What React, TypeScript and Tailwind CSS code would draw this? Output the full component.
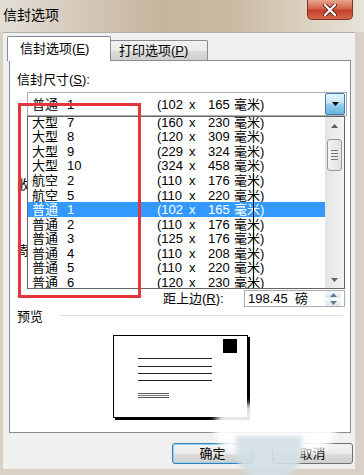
import React from 'react'

type Row = [string, string, string, string]

const rows: Row[] = [
  ['大型', '7', '(160', '230'],
  ['大型', '8', '(120', '309'],
  ['大型', '9', '(229', '324'],
  ['大型', '10', '(324', '458'],
  ['航空', '2', '(110', '176'],
  ['航空', '5', '(110', '220'],
  ['普通', '1', '(102', '165'],
  ['普通', '2', '(110', '176'],
  ['普通', '3', '(125', '176'],
  ['普通', '4', '(110', '208'],
  ['普通', '5', '(110', '220'],
  ['普通', '6', '(120', '230'],
]

const SizeCells = ({ r }: { r: Row }) => (
  <>
    <span className="w-[35px] shrink-0">{r[0]}</span>
    <span className="w-[90px] shrink-0">{r[1]}</span>
    <span className="w-[32px] shrink-0">{r[2]}</span>
    <span className="w-[19px] shrink-0">x</span>
    <span className="w-[26px] shrink-0">{r[3]}</span>
    <span className="shrink-0">毫米)</span>
  </>
)

const Tri = ({ up, color = '#555' }: { up?: boolean; color?: string }) => (
  <svg width="7" height="4" viewBox="0 0 7 4">
    <path d={up ? 'M0 4 L3.5 0 L7 4 Z' : 'M0 0 L7 0 L3.5 4 Z'} fill={color} />
  </svg>
)

const Envelope = () => (
  <svg width="138" height="86" viewBox="0 0 138 86">
    <rect x="2" y="2" width="135" height="83" fill="#000" />
    <rect x="0.5" y="0.5" width="134" height="82" fill="#fff" stroke="#000" />
    <rect x="110" y="4" width="14" height="14" fill="#000" />
    <line x1="25" y1="23.5" x2="99" y2="23.5" stroke="#222" />
    <line x1="25" y1="31.5" x2="99" y2="31.5" stroke="#222" />
    <line x1="25" y1="38.5" x2="99" y2="38.5" stroke="#222" />
    <line x1="25" y1="45.5" x2="99" y2="45.5" stroke="#222" />
    <line x1="25" y1="58.5" x2="56" y2="58.5" stroke="#555" />
    <line x1="25" y1="60.5" x2="56" y2="60.5" stroke="#777" />
    <line x1="25" y1="62.5" x2="56" y2="62.5" stroke="#555" />
  </svg>
)

export default function App() {
  return (
    <div className="relative w-[364px] h-[475px] overflow-hidden bg-[#d9d1c5] text-black text-[13px] font-['Liberation_Sans','Noto_Sans_CJK_SC',sans-serif]">
      {/* title bar */}
      <div className="h-[32px] flex items-start justify-between bg-[linear-gradient(90deg,#e3ded7_0%,#d2c6b6_25%,#c6b49b_45%,#cbbba4_65%,#ddd3c4_85%,#e7e2da_100%)]">
        <span className="ml-[3px] mt-[5px] text-[14px] leading-[18px] font-['Noto_Sans_CJK_SC',sans-serif]">信封选项</span>
        <div className="mr-[11px] w-[46px] h-[20px] rounded-b-[5px] border border-t-0 border-[#7d3424] bg-[linear-gradient(180deg,#e7a58f_0%,#d4654a_45%,#c4422b_55%,#d8654a_100%)] flex items-center justify-center">
          <svg width="14" height="12" viewBox="0 0 14 12">
            <path d="M2 1 L12 11 M12 1 L2 11" stroke="#5a2418" strokeWidth="4" strokeLinecap="round" />
            <path d="M2 1 L12 11 M12 1 L2 11" stroke="#fff" strokeWidth="2.2" strokeLinecap="round" />
          </svg>
        </div>
      </div>

      {/* client area */}
      <div className="ml-[3px] w-[352px] h-[437px] bg-[#f0f0f0] border-t border-[#b8b0a4] pt-[3px]">
        {/* tabs */}
        <div className="flex items-end h-[24px] pl-[4px] relative z-10">
          <div className="w-[104px] h-[25px] -mb-px bg-white border border-b-0 border-[#898c95] rounded-t-[2px] pl-[12px] pt-[2px] leading-[20px]">
            信封选项(<span className="underline">E</span>)
          </div>
          <div className="w-[97px] h-[20px] border border-l-0 border-b-0 border-[#898c95] rounded-tr-[2px] bg-[linear-gradient(180deg,#f2f2f2_0%,#ebebeb_50%,#dcdcdc_51%,#cfcfcf_100%)] pl-[8px] leading-[19px]">
            打印选项(<span className="underline">P</span>)
          </div>
        </div>

        {/* tab panel */}
        <div className="relative ml-[6px] w-[342px] h-[373px] bg-white border border-[#898c95] flex flex-col">
          <div className="ml-[7px] mt-[11px] h-[16px] leading-[16px]">
            信封尺寸(<span className="underline">S</span>):
          </div>

          {/* combo */}
          <div className="ml-[17px] mt-[4px] w-[320px] h-[24px] border border-[#abadb3] flex items-center">
            <div className="flex-1 flex items-center pl-[4px] leading-none">
              <SizeCells r={['普通', '1', '(102', '165']} />
            </div>
            <div className="mr-px w-[20px] h-[22px] border border-[#3c7fb1] rounded-[2px] bg-[linear-gradient(180deg,#e5f4fc_0%,#c4e5f6_45%,#98d1ef_50%,#68b3db_100%)] flex items-center justify-center">
              <Tri color="#000" />
            </div>
          </div>

          {/* labels mostly hidden under the open list */}
          <div className="h-[174px] flex flex-col pl-[7px]">
            <div className="mt-[61px] w-[10px] h-[16px] overflow-hidden whitespace-nowrap leading-[16px]">收</div>
            <div className="mt-[50px] w-[10px] h-[16px] overflow-hidden whitespace-nowrap leading-[16px]">寄</div>
          </div>

          {/* 距上边 */}
          <div className="flex items-center h-[17px]">
            <span className="ml-[153px] w-[81px] leading-none">距上边(<span className="underline">R</span>):</span>
            <div className="w-[101px] h-[17px] border border-[#abadb3] flex items-center">
              <span className="flex-1 pl-[3px] leading-none">198.45&nbsp; 磅</span>
              <div className="mr-[3px] w-[16px] h-[15px] flex flex-col gap-px">
                <div className="flex-1 rounded-[2px] bg-[linear-gradient(180deg,#f6f8fa,#dde6ee)] flex items-center justify-center"><Tri up color="#5f7c95" /></div>
                <div className="flex-1 rounded-[2px] bg-[linear-gradient(180deg,#f6f8fa,#dde6ee)] flex items-center justify-center"><Tri color="#5f7c95" /></div>
              </div>
            </div>
          </div>

          {/* 预览 */}
          <div className="mt-[2px] h-[16px] flex items-start">
            <span className="ml-[7px] w-[43px] leading-[16px]">预览</span>
            <div className="mt-[6px] w-[283px] h-px bg-[#d5dfe5]" />
          </div>

          <div className="ml-[103px] mt-[10px]">
            <Envelope />
          </div>

          {/* open dropdown list */}
          <div className="absolute left-[17px] top-[55px] w-[318px] h-[173px] bg-white border border-[#646464] flex overflow-hidden">
            <div className="relative flex-1 flex flex-col -mt-[2px]">
              {rows.map((r, i) => (
                <div
                  key={i}
                  className={`h-[14.55px] shrink-0 flex items-center pl-[4px] leading-none ${i === 6 ? 'bg-[#3399ff] text-white' : ''}`}
                >
                  <SizeCells r={r} />
                </div>
              ))}
              <div className="absolute left-[225px] top-[58px] bottom-0 w-px bg-black" />
            </div>
            <div className="w-[19px] bg-[linear-gradient(90deg,#e4e4e4,#f4f4f4)] flex flex-col items-center">
              <div className="h-[17px] flex items-center"><Tri up color="#606060" /></div>
              <div className="mt-[5px] w-[15px] h-[32px] rounded-[3px] border border-[#979797] bg-[linear-gradient(90deg,#f3f3f3,#e2e2e2)] flex flex-col items-center justify-center gap-[2px]">
                <div className="w-[7px] h-px bg-[#777]" />
                <div className="w-[7px] h-px bg-[#777]" />
                <div className="w-[7px] h-px bg-[#777]" />
                <div className="w-[7px] h-px bg-[#777]" />
              </div>
              <div className="flex-1" />
              <div className="h-[17px] flex items-center"><Tri color="#606060" /></div>
            </div>
          </div>
        </div>

        {/* buttons */}
        <div className="flex mt-[10px] ml-[169px] gap-[19px]">
          <div className="w-[81px] h-[21px] rounded-[3px] border border-[#3c7fb1] bg-[linear-gradient(180deg,#f2f2f2_0%,#ebebeb_50%,#dddddd_51%,#cfcfcf_100%)] flex items-center justify-center shadow-[inset_0_0_0_1px_#8fd1f3]">
            确定
          </div>
          <div className="w-[81px] h-[21px] rounded-[3px] border border-[#707070] bg-[linear-gradient(180deg,#f2f2f2_0%,#ebebeb_50%,#dddddd_51%,#cfcfcf_100%)] flex items-center justify-center">
            取消
          </div>
        </div>
      </div>

      {/* red annotation box */}
      <div className="absolute left-[18px] top-[103px] w-[123px] h-[195px] border-[3px] border-[#e5363b]" />

      {/* watermark blob */}
      <div className="absolute left-[214px] top-[404px] w-[122px] h-[48px] rounded-full bg-white/90 blur-[3px]" />
      <div className="absolute left-[236px] top-[436px] w-[66px] h-[45px] rounded-b-[30px] bg-[#d3dfe5]/90 blur-[2px]" />
    </div>
  )
}
